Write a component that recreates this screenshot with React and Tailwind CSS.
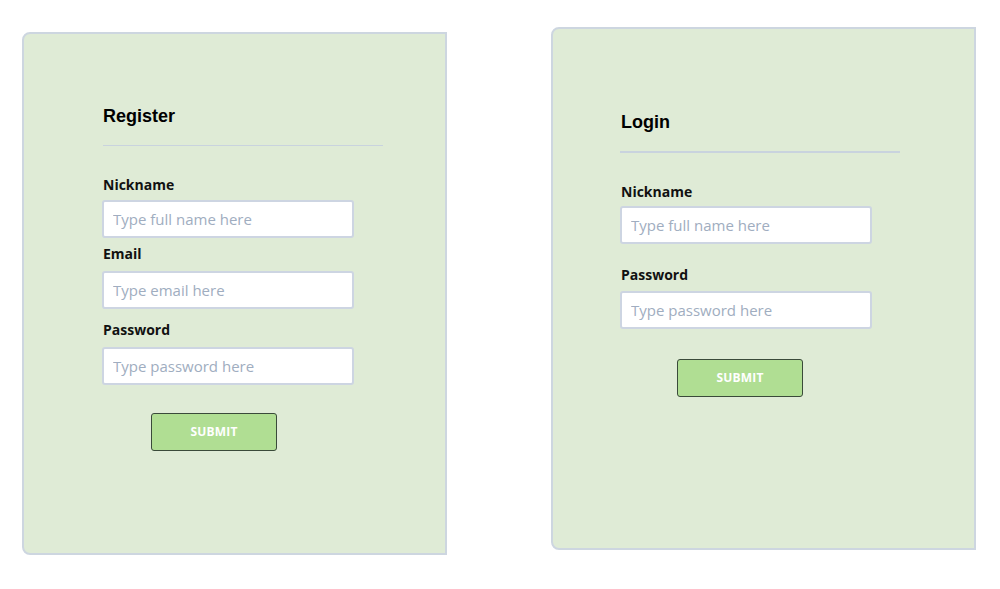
import React from "react";

function Field({ label, placeholder, labelMt, inputMt, type = "text" }) {
  return (
    <>
      <label
        className="block ml-[1px] text-[14px] leading-[20px] font-bold text-[#111111]"
        style={{ marginTop: labelMt }}
      >
        {label}
      </label>
      <input
        type={type}
        placeholder={placeholder}
        className="block w-[252px] h-[38px] bg-white border-2 border-[#cdd5e2] rounded-[3px] px-[9px] text-[15px] text-[#333] placeholder:text-[#a0adc0] outline-none"
        style={{ marginTop: inputMt, fontFamily: '"Open Sans", sans-serif' }}
      />
    </>
  );
}

export default function App() {
  return (
    <div
      className="w-[1000px] h-[589px] bg-white flex items-start"
      style={{ fontFamily: '"Open Sans", sans-serif' }}
    >
      {/* Register card */}
      <div className="ml-[22px] mt-[32px] w-[425px] h-[523px] bg-[#dfebd6] border-2 border-[#cdd6e0] rounded-l-[8px] pl-[78px]">
        <h2
          className="mt-[71px] ml-[1px] text-[18px] leading-[22px] font-bold text-black"
          style={{ fontFamily: '"Liberation Sans", Arial, sans-serif' }}
        >
          Register
        </h2>
        <div className="mt-[18px] ml-[1px] w-[280px] h-px bg-[#c9d3de]" />
        <Field label="Nickname" placeholder="Type full name here" labelMt={29} inputMt={5} />
        <Field label="Email" placeholder="Type email here" labelMt={6} inputMt={7} />
        <Field label="Password" placeholder="Type password here" labelMt={11} inputMt={7} type="password" />
        <button className="mt-[28px] ml-[49px] w-[126px] h-[38px] bg-[#b0de93] border border-[#3a4a3a] rounded-[3px] text-white text-[12px] font-bold tracking-[0.2px]">
          SUBMIT
        </button>
      </div>

      {/* Login card */}
      <div className="ml-[104px] mt-[27px] w-[425px] h-[523px] bg-[#dfebd6] border-2 border-[#cdd6e0] rounded-l-[8px] pl-[67px]">
        <h2
          className="mt-[82px] ml-[1px] text-[18px] leading-[22px] font-bold text-black"
          style={{ fontFamily: '"Liberation Sans", Arial, sans-serif' }}
        >
          Login
        </h2>
        <div className="mt-[18px] w-[280px] h-[2px] bg-[#c9d3de]" />
        <Field label="Nickname" placeholder="Type full name here" labelMt={29} inputMt={4} />
        <Field label="Password" placeholder="Type password here" labelMt={21} inputMt={6} type="password" />
        <button className="mt-[30px] ml-[57px] w-[126px] h-[38px] bg-[#b0de93] border border-[#3a4a3a] rounded-[3px] text-white text-[12px] font-bold tracking-[0.2px]">
          SUBMIT
        </button>
      </div>
    </div>
  );
}
